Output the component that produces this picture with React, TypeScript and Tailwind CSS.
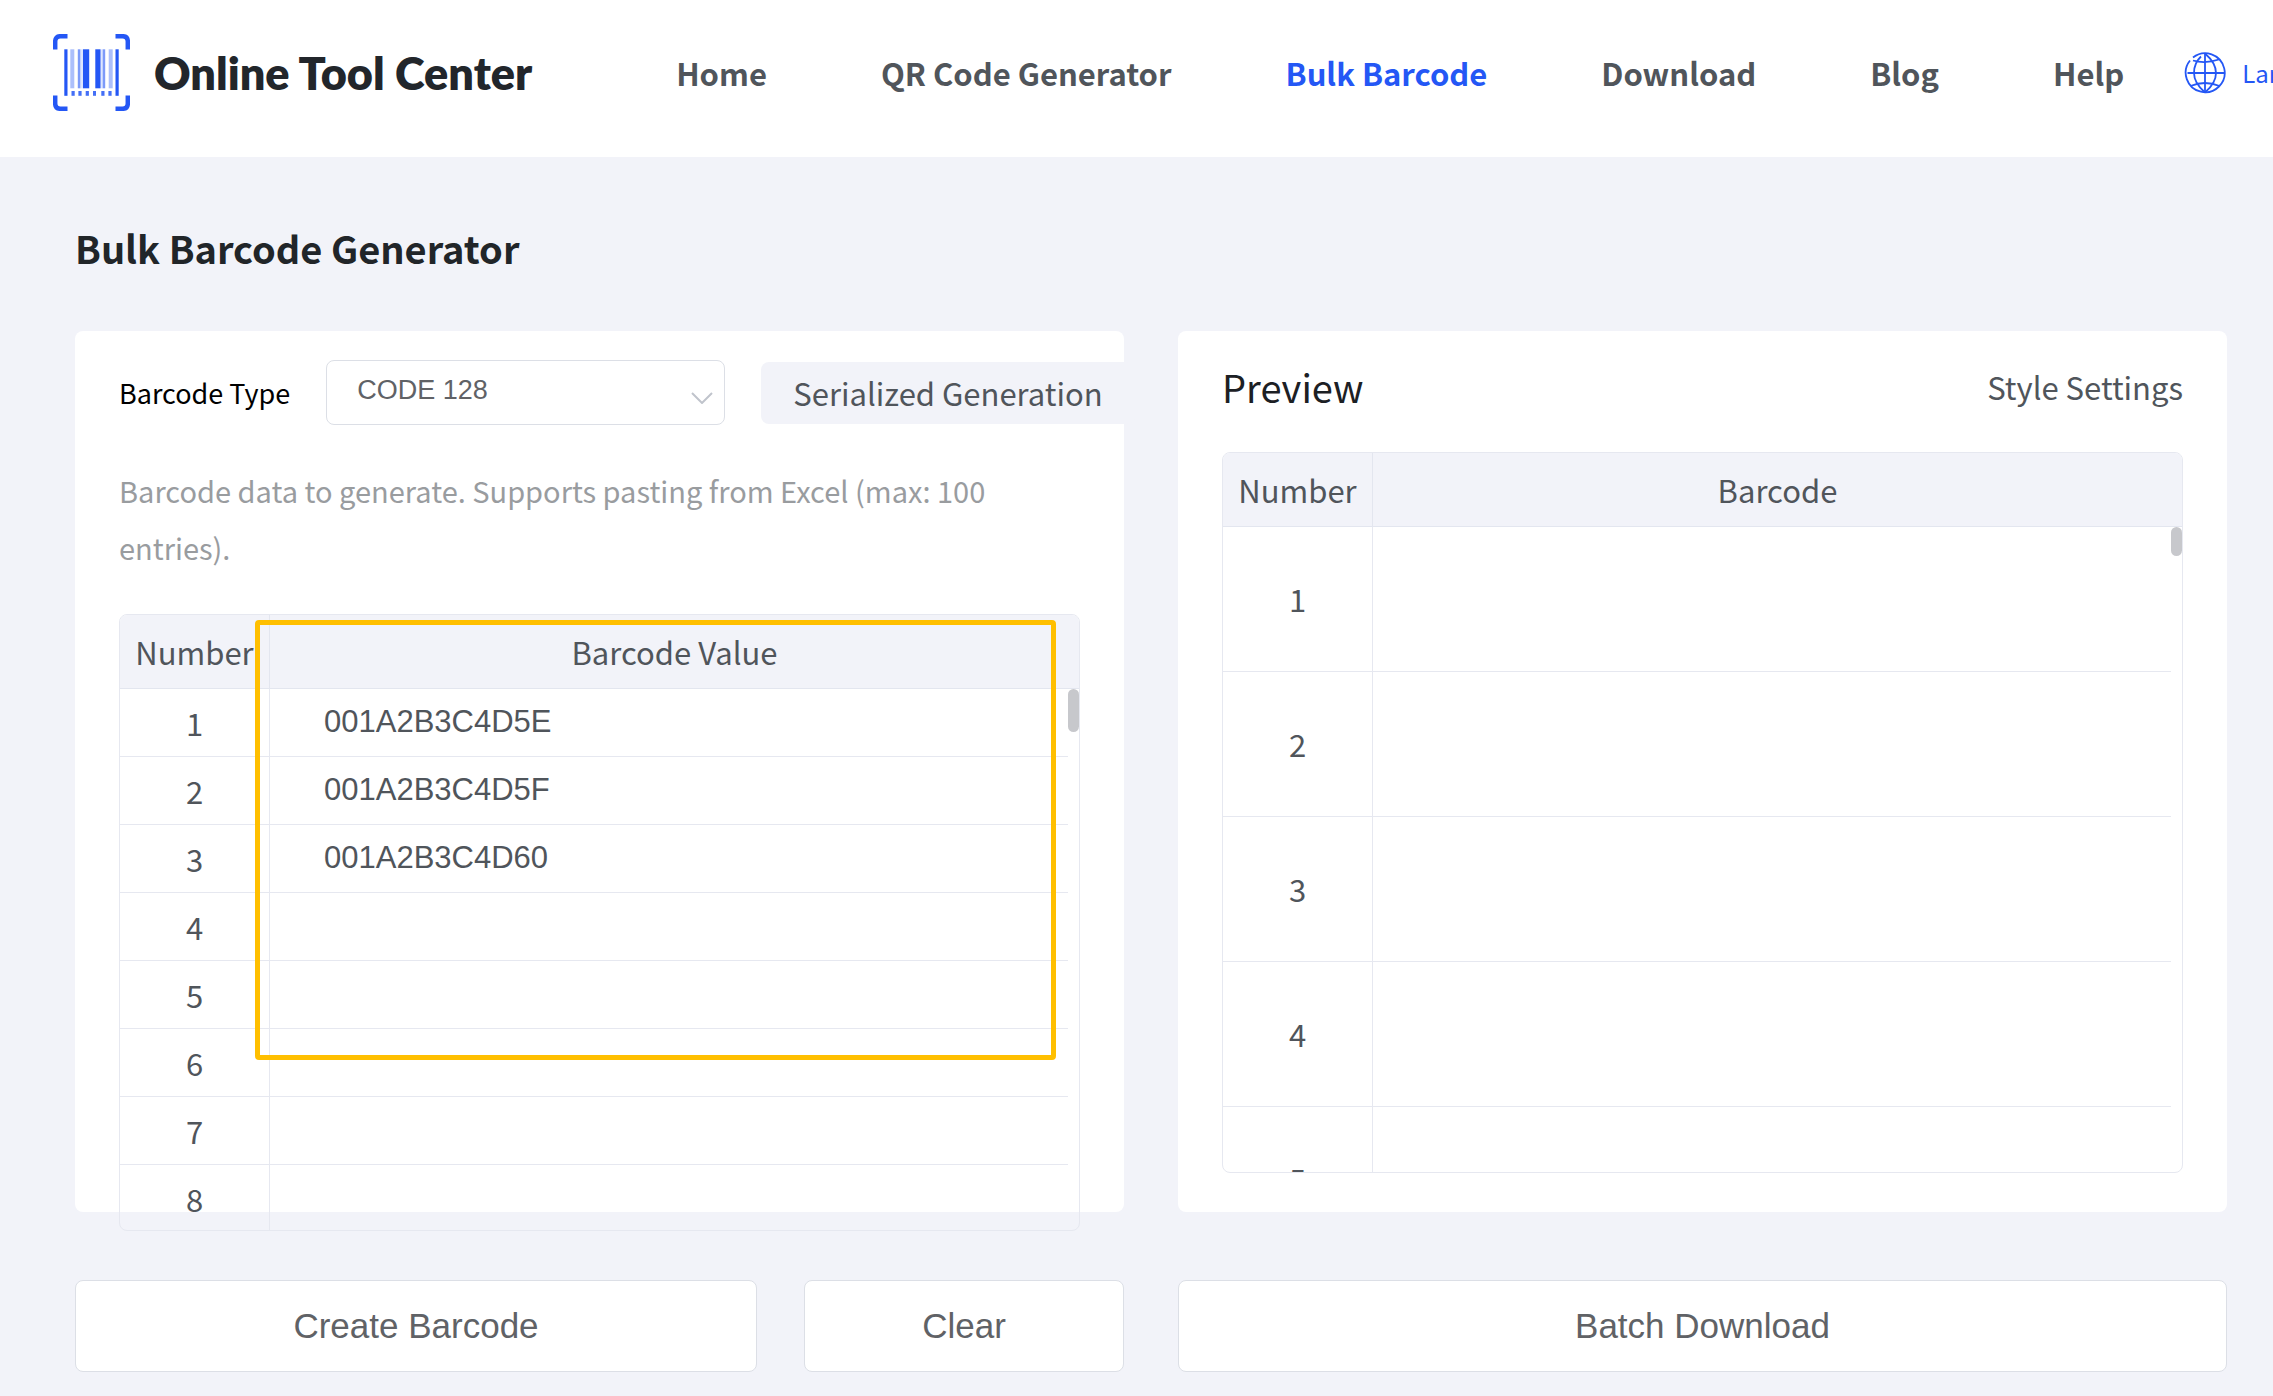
import React from 'react';

const navItems = [
  { label: 'Home', active: false },
  { label: 'QR Code Generator', active: false },
  { label: 'Bulk Barcode', active: true },
  { label: 'Download', active: false },
  { label: 'Blog', active: false },
  { label: 'Help', active: false },
];

const barcodeValues = ['001A2B3C4D5E', '001A2B3C4D5F', '001A2B3C4D60', '', '', '', '', ''];
const previewRows = [1, 2, 3, 4, 5];

function LogoMark() {
  return (
    <svg className="size-[77px] shrink-0" viewBox="0 0 77 77" fill="none" aria-hidden="true">
      <g stroke="#2457f5" strokeWidth="4.500">
        <path d="M2.200 15.500V7.500Q2.200 2.200 7.500 2.200H14.500" />
        <path d="M62.500 2.200H69.500Q74.800 2.200 74.800 7.500V15.500" />
        <path d="M2.200 61.500V69.500Q2.200 74.800 7.500 74.800H14.500" />
        <path d="M62.500 74.800H69.500Q74.800 74.800 74.800 69.500V61.500" />
      </g>
      <g fill="#2457f5">
        <rect x="11.300" y="15.300" width="3.200" height="46.500" />
        <rect x="62.500" y="15.300" width="3.200" height="46.500" />
        <rect x="30" y="15.300" width="6.200" height="39" />
        <rect x="42.300" y="15.300" width="5.200" height="39" />
        <rect x="24.800" y="15.300" width="2.500" height="39" opacity="0.6" />
        <rect x="27.300" y="15.300" width="2.700" height="39" opacity="0.15" />
        <rect x="47.500" y="15.300" width="2.200" height="39" opacity="0.15" />
        <rect x="49.700" y="15.300" width="2.500" height="39" opacity="0.6" />
        <rect x="17.300" y="15.300" width="4" height="39" opacity="0.38" />
        <rect x="55.700" y="15.300" width="4" height="39" opacity="0.38" />
        <g opacity="0.85">
          <rect x="18.500" y="57" width="3.200" height="4.800" />
          <rect x="25.400" y="57" width="3.200" height="4.800" />
          <rect x="32.700" y="57" width="3.200" height="4.800" />
          <rect x="40" y="57" width="3" height="4.800" />
          <rect x="48.300" y="57" width="3.200" height="4.800" />
          <rect x="55.400" y="57" width="3.200" height="4.800" />
        </g>
      </g>
    </svg>
  );
}

function GlobeIcon() {
  return (
    <svg className="size-[42px] shrink-0" viewBox="0 0 42 42" fill="none" stroke="#2457f5" strokeWidth="1.800" aria-hidden="true">
      <path d="M9 5.500A19.500 19.500 0 1 1 6 8.500" />
      <path d="M17 4.500Q10 11 10 21Q10 31 21 40.500" />
      <path d="M21 1.500Q32 11 32 21Q32 31 21 40.500" />
      <path d="M21 1.500V40.500M3.500 21H40.500" />
      <path d="M9 8.500Q21 12 35 7.500M6.500 34Q21 28 35.500 34" />
    </svg>
  );
}

function Header() {
  return (
    <header className="flex h-[157px] items-center overflow-hidden bg-white pb-3 pl-[53px]">
      <a href="#" className="flex shrink-0 items-center gap-6">
        <LogoMark />
        <span className="whitespace-nowrap font-[Lato,sans-serif] text-[45px] leading-[56px] font-extrabold text-[#22262b]">
          Online Tool Center
        </span>
      </a>
      <nav className="ml-36 flex shrink-0 items-center gap-[114px]">
        {navItems.map((item) => (
          <a
            key={item.label}
            href="#"
            aria-current={item.active ? 'page' : undefined}
            className={
              item.active
                ? 'whitespace-nowrap text-[31px] leading-[48px] font-bold text-[#2457f5]'
                : 'whitespace-nowrap text-[31px] leading-[48px] font-bold text-[#50555b]'
            }
          >
            {item.label}
          </a>
        ))}
      </nav>
      <button type="button" className="ml-[60px] flex shrink-0 items-center gap-4 text-[24px] leading-[36px] text-[#2457f5]">
        <GlobeIcon />
        Language
      </button>
    </header>
  );
}

function ValueTable() {
  return (
    <div className="relative">
      <div className="h-[617px] overflow-hidden rounded-lg border border-[#e6e8f0]">
        <table className="block text-[31px] leading-[48px] text-[#50555b]">
          <thead className="block border-b border-[#e3e6ef] bg-[#f2f3f9]">
            <tr className="flex h-[73px] items-stretch">
              <th scope="col" className="flex w-[150px] shrink-0 items-center justify-center border-r border-[#e3e6ef] font-normal">
                Number
              </th>
              <th scope="col" className="flex flex-1 items-center justify-center font-normal">
                Barcode Value
              </th>
            </tr>
          </thead>
          <tbody className="block pr-[11px]">
            {barcodeValues.map((value, index) => (
              <tr key={index} className="flex h-[68px] items-stretch border-b border-[#e6e8f0]">
                <td className="flex w-[150px] shrink-0 items-center justify-center border-r border-[#e6e8f0]">{index + 1}</td>
                <td className="flex flex-1">
                  <input
                    type="text"
                    aria-label={`Barcode value ${index + 1}`}
                    defaultValue={value}
                    className="w-full bg-transparent pr-4 pb-px pl-[54px] font-['Liberation_Sans',Arial,sans-serif] text-[31px] leading-[48px] outline-none"
                  />
                </td>
              </tr>
            ))}
          </tbody>
        </table>
      </div>
      <div className="absolute top-[75px] right-px h-[43px] w-[11px] rounded-full bg-[#c7c8cc]" />
      <div className="pointer-events-none absolute top-1.5 right-6 left-[136px] h-[440px] rounded border-[5px] border-[#ffbf00]" />
    </div>
  );
}

function PreviewTable() {
  return (
    <div className="relative">
      <div className="h-[721px] overflow-hidden rounded-lg border border-[#e6e8f0]">
        <table className="block text-[31px] leading-[48px] text-[#50555b]">
          <thead className="block border-b border-[#e3e6ef] bg-[#f2f3f9]">
            <tr className="flex h-[73px] items-stretch">
              <th scope="col" className="flex w-[150px] shrink-0 items-center justify-center border-r border-[#e3e6ef] font-normal">
                Number
              </th>
              <th scope="col" className="flex flex-1 items-center justify-center font-normal">
                Barcode
              </th>
            </tr>
          </thead>
          <tbody className="block pr-[11px]">
            {previewRows.map((row) => (
              <tr key={row} className="flex h-[145px] items-stretch border-b border-[#e6e8f0]">
                <td className="flex w-[150px] shrink-0 items-center justify-center border-r border-[#e6e8f0]">{row}</td>
                <td className="flex-1" />
              </tr>
            ))}
          </tbody>
        </table>
      </div>
      <div className="absolute top-[75px] right-px h-[29px] w-[11px] rounded-full bg-[#c7c8cc]" />
    </div>
  );
}

const actionButton =
  "h-[92px] rounded-lg border border-[#dcdfe6] bg-white font-['Liberation_Sans',Arial,sans-serif] text-[35px] leading-[48px] text-[#606266]";

export default function App() {
  return (
    <div className="min-h-screen overflow-x-hidden bg-[#f2f3f9] font-['Noto_Sans_CJK_SC',sans-serif]">
      <Header />
      <main className="pt-[63px] pr-[46px] pb-6 pl-[75px]">
        <h1 className="text-[38px] leading-[56px] font-bold text-[#212529]">Bulk Barcode Generator</h1>

        <div className="mt-[55px] grid grid-cols-2 gap-x-[54px] gap-y-[68px]">
          <section className="min-w-0 rounded-lg bg-white px-11 pt-[29px] pb-[39px]">
            <div className="flex items-center gap-9">
              <label htmlFor="barcode-type" className="shrink-0 whitespace-nowrap text-[27px] leading-[48px] text-black">
                Barcode Type
              </label>
              <div className="relative w-[399px] shrink-0">
                <select
                  id="barcode-type"
                  className="h-[65px] w-full appearance-none rounded-lg border border-[#dcdfe6] bg-white pb-1 pl-[30px] font-['Liberation_Sans',Arial,sans-serif] text-[27px] text-[#606266]"
                >
                  <option>CODE 128</option>
                </select>
                <svg
                  className="pointer-events-none absolute top-8 right-3 h-3 w-[22px]"
                  viewBox="0 0 22 12"
                  fill="none"
                  stroke="#c0c4cc"
                  strokeWidth="2"
                  aria-hidden="true"
                >
                  <path d="M1 1L11 11L21 1" />
                </svg>
              </div>
              <button
                type="button"
                className="h-[62px] shrink-0 whitespace-nowrap rounded-lg bg-[#f2f3f9] px-8 text-[31px] leading-[48px] text-[#50555b]"
              >
                Serialized Generation
              </button>
            </div>
            <p className="mt-[37px] mb-[38px] text-[29px] leading-[57px] text-[#999c9f]">
              Barcode data to generate. Supports pasting from Excel (max: 100 entries).
            </p>
            <div className="-mb-[58px]">
              <ValueTable />
            </div>
          </section>

          <section className="min-w-0 rounded-lg bg-white px-11 pt-[29px] pb-[39px]">
            <div className="mb-[39px] flex h-[53px] items-center justify-between">
              <h2 className="text-[38px] leading-[53px] text-[#1c2024]">Preview</h2>
              <button type="button" className="text-[31px] leading-[48px] text-[#50555b]">
                Style Settings
              </button>
            </div>
            <PreviewTable />
          </section>

          <div className="flex gap-[47px]">
            <button type="button" className={`${actionButton} flex-1`}>
              Create Barcode
            </button>
            <button type="button" className={`${actionButton} w-80`}>
              Clear
            </button>
          </div>
          <button type="button" className={actionButton}>
            Batch Download
          </button>
        </div>
      </main>
    </div>
  );
}
